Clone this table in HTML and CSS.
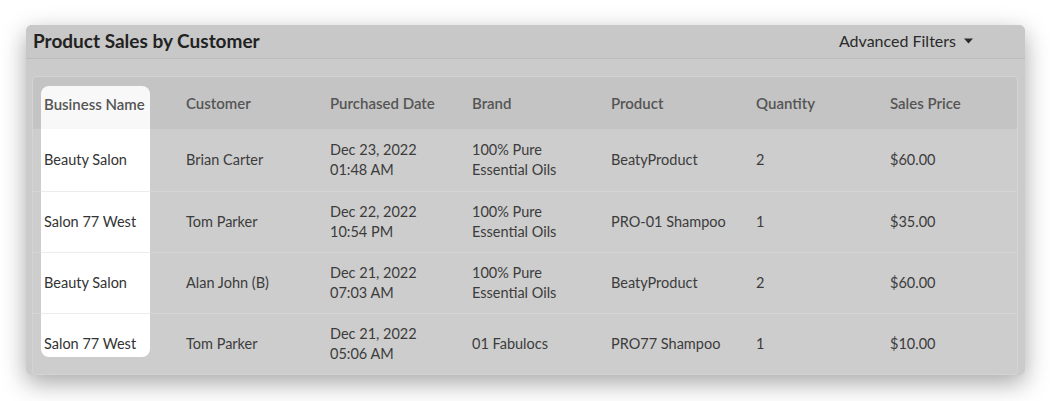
FILE: index.html
```html
<!DOCTYPE html>
<html>
<head>
<meta charset="utf-8">
<link rel="stylesheet" href="styles.css">
</head>
<body>
<div class="card">
  <div class="card-head">
    <div class="title">Product Sales by Customer</div>
    <div class="filters">Advanced Filters <svg class="caret" width="9" height="6" viewBox="0 0 9 6"><path d="M0 0.5 H9 L4.5 5.5 Z" fill="#2a2a2a"/></svg></div>
  </div>
  <div class="card-body">
    <div class="table">
      <div class="row head">
        <div class="cell first">Business Name</div>
        <div class="cell">Customer</div>
        <div class="cell">Purchased Date</div>
        <div class="cell">Brand</div>
        <div class="cell">Product</div>
        <div class="cell">Quantity</div>
        <div class="cell">Sales Price</div>
      </div>
      <div class="row data">
        <div class="cell first">Beauty Salon</div>
        <div class="cell">Brian Carter</div>
        <div class="cell">Dec 23, 2022<br>01:48 AM</div>
        <div class="cell">100% Pure<br>Essential Oils</div>
        <div class="cell">BeatyProduct</div>
        <div class="cell">2</div>
        <div class="cell">$60.00</div>
      </div>
      <div class="row data">
        <div class="cell first">Salon 77 West</div>
        <div class="cell">Tom Parker</div>
        <div class="cell">Dec 22, 2022<br>10:54 PM</div>
        <div class="cell">100% Pure<br>Essential Oils</div>
        <div class="cell">PRO-01 Shampoo</div>
        <div class="cell">1</div>
        <div class="cell">$35.00</div>
      </div>
      <div class="row data">
        <div class="cell first">Beauty Salon</div>
        <div class="cell">Alan John (B)</div>
        <div class="cell">Dec 21, 2022<br>07:03 AM</div>
        <div class="cell">100% Pure<br>Essential Oils</div>
        <div class="cell">BeatyProduct</div>
        <div class="cell">2</div>
        <div class="cell">$60.00</div>
      </div>
      <div class="row data last">
        <div class="cell first">Salon 77 West</div>
        <div class="cell">Tom Parker</div>
        <div class="cell">Dec 21, 2022<br>05:06 AM</div>
        <div class="cell">01 Fabulocs</div>
        <div class="cell">PRO77 Shampoo</div>
        <div class="cell">1</div>
        <div class="cell">$10.00</div>
      </div>
    </div>
  </div>
</div>
</body>
</html>
```
FILE: styles.css
```css
html, body {
  margin: 0;
  background: #ffffff;
}
body {
  padding: 25px 25px 0 26px;
  font-family: "Lato", "Open Sans", sans-serif;
  height: 401px;
  box-sizing: border-box;
  overflow: hidden;
}
.card {
  width: 999px;
  height: 350px;
  background: #cbcbcb;
  border-radius: 6px;
  box-shadow: 0 8px 24px rgba(0, 0, 0, 0.35);
  overflow: hidden;
  display: flex;
  flex-direction: column;
}
.card-head {
  flex-shrink: 0;
  height: 33px;
  background: #c8c8c8;
  border-bottom: 1px solid #bdbdbd;
  display: flex;
  align-items: center;
  justify-content: space-between;
  padding: 0 52px 0 7px;
}
.title {
  font-size: 19px;
  font-weight: 700;
  color: #222;
  margin-top: -2px;
}
.filters {
  font-size: 16px;
  color: #2a2a2a;
  display: flex;
  align-items: center;
  gap: 8px;
  margin-top: -2px;
}
.card-body {
  padding: 17px 7px 0 6px;
  flex: 1;
}
.table {
  background: #cdcdcd;
  border: 1px solid #d4d4d4;
  border-radius: 4px;
}
.row {
  display: grid;
  grid-template-columns: 145px 144px 142px 139px 145px 134px 1fr;
  padding-left: 8px;
  box-sizing: border-box;
}
.row.head {
  height: 52px;
  background: #c4c4c4;
  border-radius: 4px 4px 0 0;
  font-size: 15px;
  font-weight: 600;
  color: #555;
}
.row.data {
  height: 61px;
  font-size: 14.5px;
  color: #3c3c3c;
  line-height: 20px;
  border-top: 1px solid #d6d6d6;
}
.row.data:nth-child(2) {
  border-top: none;
  height: 62px;
}
.cell {
  display: flex;
  align-items: center;
}
.cell.first {
  margin-right: 36px;
  padding-left: 3px;
  background: #ffffff;
  color: #333;
}
.row.head .cell.first {
  margin-top: 9px;
  padding-bottom: 7px;
  background: #f8f8f8;
  border-radius: 8px 8px 0 0;
  color: #555;
}
.row.data .cell.first {
  margin-top: -1px;
  border-top: 1px solid #ececec;
}
.row.data:nth-child(2) .cell.first {
  margin-top: 0;
  border-top: none;
}
.row.last .cell.first {
  margin-bottom: 17px;
  padding-top: 16px;
  border-radius: 0 0 8px 8px;
}
```
